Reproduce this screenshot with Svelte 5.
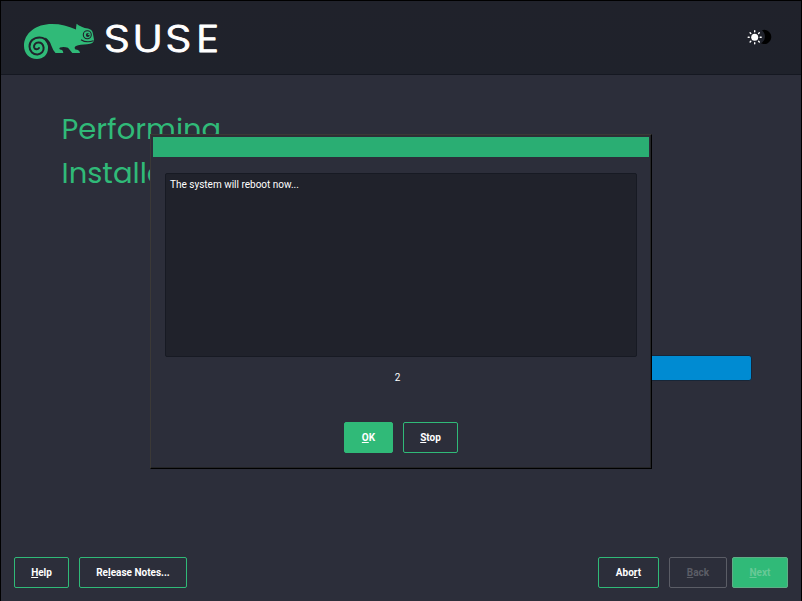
<script>
  const left = [
    { pre: '', key: 'H', post: 'elp', w: 55 },
    { pre: 'Re', key: 'l', post: 'ease Notes...', w: 108 }
  ];
  const right = [
    { pre: 'Abo', key: 'r', post: 't', w: 61, gap: 10 },
    { pre: '', key: 'B', post: 'ack', w: 58, gap: 5, kind: 'disabled' },
    { pre: '', key: 'N', post: 'ext', w: 56, gap: 0, kind: 'next' }
  ];
  const dialogButtons = [
    { pre: '', key: 'O', post: 'K', w: 49, kind: 'primary' },
    { pre: '', key: 'S', post: 'top', w: 55 }
  ];
  const rays = [0, 45, 90, 135, 180, 225, 270, 315];
</script>

{#snippet button(b)}
  <button class={['btn', b.kind]} style:width="{b.w}px" style:margin-right="{b.gap ?? 0}px"
    >{b.pre}<span class="key">{b.key}</span>{b.post}</button>
{/snippet}

<div class="screen">
  <header>
    <svg class="logo" width="200" height="44" viewBox="22 20 200 44" role="img" aria-label="SUSE">
      <path fill="#30ba78" d="M24 46C24 33 36 24 52 24C61 24 68 26 76 29.6Q76 27 76.600 23.700Q81 27.400 88 28.600Q92 29.600 92.800 33L94 39.500Q94 44 87 44.200Q80 44.200 76 46Q73.500 47.500 75.500 49.500Q79.500 49.500 80 53H72.300L68 47.800Q64 46.500 60 47.500Q58.500 48.500 60 49.600Q63 49.600 63.300 53H55.500Q53 50.500 51.500 46Q50 40.500 45.500 37.500L45 40.500Q48.300 44 48 48C48 55 43 59 37 59C29 59 24 53 24 46Z"/>
      <path d="M48.500 44C47 40 43.500 37.400 39.500 37.400C33.500 37.400 29.500 41.500 29.500 46.500C29.500 51.500 33.300 54.600 37.600 54.400C41.600 54 44 51 43.600 47.500C43 44 40.800 42.400 38.300 42.500C35.300 42.700 33.700 44.800 34.100 47.200C34.700 49.600 37.500 50 39 48" fill="none" stroke="#20232c" stroke-width="2" stroke-linecap="round"/>
      <circle cx="87.300" cy="34.800" r="4" fill="none" stroke="#20232c" stroke-width="1.100"/>
      <circle cx="87.800" cy="35" r="1.900" fill="#20232c"/>
      <path d="M87.800 34.300h2" stroke="#30ba78" stroke-width="1.200"/>
      <path d="M81 39.700Q86 43.200 93.500 40.800" fill="none" stroke="#20232c" stroke-width="1.100"/>
      <g transform="translate(104 52.100) scale(1.200 1)"><text x="0 24 51.200 76.800">SUSE</text></g>
    </svg>
    <svg class="theme" width="26" height="18" viewBox="746 28 26 18" aria-hidden="true">
      <path d="M762 30.200A7.100 7.100 0 1 1 761 43.300Q765 41 765 37Q765 32.800 762 30.200Z" fill="#000"/>
      <circle cx="754.700" cy="37.300" r="3.500" fill="#fff"/>
      {#each rays as angle}
        <path d="M754.700 31.800v-1" stroke="#fff" stroke-width="1.400" stroke-linecap="round" transform="rotate({angle} 754.700 37.300)"/>
      {/each}
    </svg>
  </header>

  <main>
    <h1>Performing<br />Installation</h1>
    <div class="progress"></div>
  </main>

  <footer>
    <div class="group">{#each left as b}{@render button(b)}{/each}</div>
    <div class="actions">{#each right as b}{@render button(b)}{/each}</div>
  </footer>

  <div class="dialog" role="dialog" aria-label="Reboot">
    <div class="titlebar"></div>
    <div class="message">The system will reboot now...</div>
    <div class="count">2</div>
    <div class="group center">{#each dialogButtons as b}{@render button(b)}{/each}</div>
  </div>
</div>

<style>
  :global(body) { margin: 0; background: #2c2e3a; }
  .screen {
    position: relative;
    box-sizing: border-box;
    width: 802px;
    height: 601px;
    overflow: hidden;
    display: flex;
    flex-direction: column;
    border: 1px solid #000;
    border-bottom: 0;
    background: #2c2e3a;
    color: #fff;
    font: 10px/14px Roboto, sans-serif;
  }
  header {
    box-sizing: border-box;
    height: 74px;
    flex: none;
    display: flex;
    justify-content: space-between;
    padding: 19px 29px 0 21px;
    border-bottom: 1px solid #151821;
    background: linear-gradient(#20222b, #1f222b);
  }
  .theme { margin-top: 8px; }
  .logo { overflow: visible; }
  .logo text {
    font: 300 37.500px Poppins, Inter, sans-serif;
    fill: #fff;
    stroke: #fff;
    stroke-width: 0.900px;
    stroke-linejoin: round;
  }
  main { flex: 1; padding: 32px 49px 0 60px; }
  h1 {
    margin: 0;
    padding-left: 0.500px;
    color: #30ba78;
    font: 400 29px/44px Poppins, Inter, sans-serif;
    white-space: nowrap;
  }
  .progress {
    box-sizing: border-box;
    height: 26px;
    margin: 160px 0 0 210px;
    border: 1px solid #172638;
    border-radius: 3px;
    background: #008bd2;
  }
  footer { display: flex; justify-content: space-between; padding: 0 13px; height: 44px; flex: none; }
  .group { display: flex; gap: 10px; }
  .actions { display: flex; }
  .btn {
    box-sizing: border-box;
    height: 31px;
    padding: 0;
    border: 1px solid #30ba78;
    border-radius: 2px;
    background: transparent;
    color: #fff;
    font: 700 10px/14px Roboto, sans-serif;
  }
  .key { text-decoration: underline; text-decoration-thickness: 1px; text-underline-offset: 1px; text-decoration-skip-ink: none; }
  .primary { background: #30ba78; }
  .disabled { border-color: #5b5d66; color: #5b5d66; }
  .next { background: #30ba78; border-color: #5fae86; color: #68c997; }
  .dialog {
    position: absolute;
    left: 149px;
    top: 133px;
    box-sizing: border-box;
    width: 502px;
    height: 335px;
    padding: 2px;
    display: flex;
    flex-direction: column;
    background: #2c2e3a;
    border: 1px solid #3b3937;
    border-right-color: #000;
    border-bottom-color: #000;
    box-shadow: inset -1px -1px #242527, inset 0 1px #302f30;
  }
  .titlebar { height: 20px; background: #2aae73; flex: none; }
  .message {
    box-sizing: border-box;
    height: 184px;
    margin: 16px 12px 0;
    padding: 4px;
    border: 1px solid #171a23;
    border-radius: 2px;
    background: #20222b;
  }
  .count { margin-top: 14px; padding-right: 7px; text-align: center; line-height: 14px; }
  .center { justify-content: center; margin-top: 37px; }
</style>
